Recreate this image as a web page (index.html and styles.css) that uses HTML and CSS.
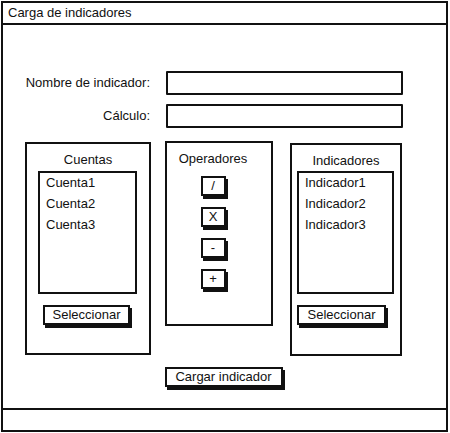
FILE: index.html
```html
<!DOCTYPE html>
<html>
<head>
<meta charset="utf-8">
<link rel="stylesheet" href="styles.css">
</head>
<body>
<div class="window">
  <div class="titlebar">Carga de indicadores</div>
  <div class="main">
    <div class="form">
      <label class="lbl">Nombre de indicador:</label>
      <div class="input"></div>
      <label class="lbl">Cálculo:</label>
      <div class="input"></div>
    </div>
    <div class="panels">
      <div class="panel p-cuentas">
        <div class="ptitle">Cuentas</div>
        <div class="list l-cuentas">
          <div class="item">Cuenta1</div>
          <div class="item">Cuenta2</div>
          <div class="item">Cuenta3</div>
        </div>
        <div class="btn b-sel">Seleccionar</div>
      </div>
      <div class="panel p-ops">
        <div class="ptitle">Operadores</div>
        <div class="ops">
          <div class="btn op">/</div>
          <div class="btn op">X</div>
          <div class="btn op">-</div>
          <div class="btn op">+</div>
        </div>
      </div>
      <div class="panel p-ind">
        <div class="ptitle">Indicadores</div>
        <div class="list l-ind">
          <div class="item">Indicador1</div>
          <div class="item">Indicador2</div>
          <div class="item">Indicador3</div>
        </div>
        <div class="btn b-sel b-sel2">Seleccionar</div>
      </div>
    </div>
    <div class="actions">
      <div class="btn b-cargar">Cargar indicador</div>
    </div>
  </div>
  <div class="footer"></div>
</div>
</body>
</html>
```

FILE: styles.css
```css
* { box-sizing: border-box; }
html, body { margin: 0; padding: 0; background: #fff; }
body {
  font-family: "Liberation Sans", Arial, sans-serif;
  font-size: 13px;
  color: #111;
}
.window {
  margin: 1px 0 0 1px;
  width: 447px;
  height: 431px;
  border: 2px solid #111;
  display: flex;
  flex-direction: column;
}
.titlebar {
  height: 22px;
  border-bottom: 2px solid #111;
  padding: 2px 0 0 5px;
  line-height: 15px;
}
.main {
  flex: 1;
  display: flex;
  flex-direction: column;
}
.form {
  margin-top: 46px;
  display: grid;
  grid-template-columns: 147px 237px;
  grid-template-rows: 24px 24px;
  column-gap: 16px;
  row-gap: 9px;
  align-items: center;
}
.lbl {
  text-align: right;
  line-height: 20px;
}
.input {
  height: 24px;
  border: 2px solid #111;
  border-radius: 1px;
}
.panels {
  margin: 14px 0 0 22px;
  display: flex;
  align-items: flex-start;
}
.panel {
  border: 2px solid #111;
  display: flex;
  flex-direction: column;
  align-items: center;
}
.p-cuentas { width: 126px; height: 213px; }
.p-ops { width: 108px; height: 185px; margin-left: 14px; margin-top: -1px; padding-right: 12px; }
.p-ind { width: 112px; height: 213px; margin-left: 17px; margin-top: 1px; }
.ptitle {
  margin-top: 7px;
  height: 17px;
  line-height: 17px;
}
.list {
  margin-top: 3px;
  height: 123px;
  border: 2px solid #111;
  padding: 1px 0 0 6px;
  align-self: flex-start;
}
.l-cuentas { width: 99px; margin-left: 11px; }
.l-ind { width: 97px; margin-left: 5px; margin-top: 2px; }
.item { height: 21px; line-height: 17px; }
.btn {
  border: 2px solid #111;
  box-shadow: 2px 3px 0 #111;
  text-align: center;
  background: #fff;
}
.b-sel {
  margin-top: 11px;
  width: 87px;
  height: 20px;
  line-height: 16px;
  margin-right: 3px;
}
.b-sel2 { margin-top: 11px; width: 89px; margin-right: 9px; }
.ops {
  display: flex;
  flex-direction: column;
  align-items: center;
  gap: 11px;
  margin-top: 9px;
}
.op {
  width: 25px;
  height: 20px;
  line-height: 16px;
}
.actions {
  display: flex;
  justify-content: center;
  margin-top: 11px;
}
.b-cargar {
  width: 118px;
  height: 20px;
  line-height: 16px;
  margin-right: 2px;
}
.footer {
  height: 22px;
  border-top: 2px solid #111;
}
```
